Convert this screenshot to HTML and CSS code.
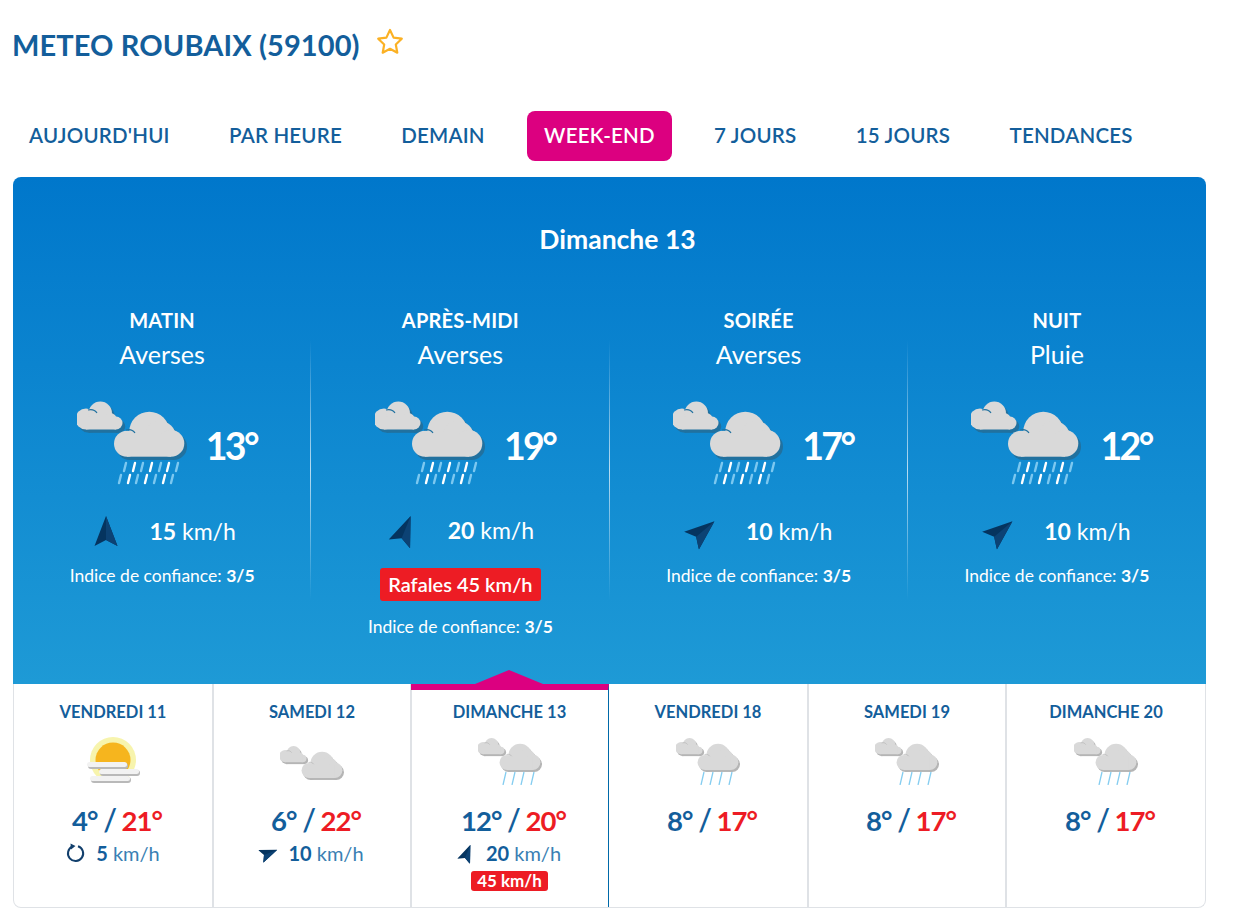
FILE: index.html
```html
<!DOCTYPE html>
<html lang="fr">
  <head>
    <meta charset="UTF-8" />
    <meta name="viewport" content="width=device-width, initial-scale=1.0" />
    <title>Meteo Roubaix</title>
    <link rel="stylesheet" href="styles.css">
  </head>
  <body>
    <svg class="sprites" width="0" height="0">
      <defs>
        <g id="cloud-shape">
          <circle cx="9" cy="19" r="10.5" />
          <circle cx="23.3" cy="13.3" r="11.7" />
          <circle cx="33" cy="20" r="7" />
          <circle cx="39" cy="23" r="6.5" />
          <rect x="9" y="17" width="30" height="12.5" />
          <circle cx="50" cy="43.7" r="13" />
          <circle cx="72.3" cy="31.7" r="20" />
          <circle cx="83" cy="37" r="16" />
          <circle cx="94" cy="43.4" r="13.3" />
          <rect x="50" y="34" width="44" height="22.7" />
        </g>
        <symbol id="clouds" viewBox="0 0 110 60">
          <use href="#cloud-shape" class="cloud-back" x="2.7" y="3.3" />
          <use href="#cloud-shape" class="cloud-front" />
          <path class="cloud-line" d="M11 10c4-1 7 0 9 3M49 30c4-1 7 0 9 3" />
        </symbol>
        <symbol id="rain-big" viewBox="0 0 110 30">
          <path class="rain-light" d="M49 4l-2 8M66 4l-2 8M84 4l-2 8M101 4l-2 8M44 16l-2 8M61 16l-2 8M79 16l-2 8M96 16l-2 8" />
          <path class="rain-white" d="M58 4l-2 8M75 4l-2 8M92 4l-2 8M53 16l-2 8M70 16l-2 8M88 16l-2 8" />
        </symbol>
        <symbol id="nav-arrow" viewBox="0 0 30 30">
          <path fill="#05345f" d="M15 0L26.5 30L15 24L3.5 30Z" />
          <path fill="#0c4274" d="M15 0L26.5 30L15 24Z" />
        </symbol>
      </defs>
    </svg>

    <div class="page">
      <div class="title-row">
        <h1 class="title">METEO ROUBAIX (59100)</h1>
        <svg class="star" viewBox="0 0 28 27">
          <path d="M14 2l3.6 7.6 8.2 1.1-6 5.8 1.5 8.2L14 20.8l-7.3 3.9 1.5-8.2-6-5.8 8.2-1.1Z" />
        </svg>
      </div>

      <nav class="tabs">
        <a class="tab">AUJOURD'HUI</a>
        <a class="tab">PAR HEURE</a>
        <a class="tab">DEMAIN</a>
        <a class="tab active">WEEK-END</a>
        <a class="tab">7 JOURS</a>
        <a class="tab">15 JOURS</a>
        <a class="tab">TENDANCES</a>
      </nav>

      <section class="hero">
        <h2 class="hero-date">Dimanche 13</h2>
        <div class="periods">
          <div class="period">
            <div class="period-name">MATIN</div>
            <div class="period-sky">Averses</div>
            <div class="period-main">
              <svg class="icon-big"><use href="#clouds" width="110" height="60" /><use href="#rain-big" y="59" width="110" height="30" /></svg>
              <span class="period-temp">13°</span>
            </div>
            <div class="period-wind">
              <svg class="arrow-big dir-n"><use href="#nav-arrow" /></svg>
              <span><b>15</b> km/h</span>
            </div>
            <div class="trust">Indice de confiance: <b>3/5</b></div>
          </div>
          <div class="period">
            <div class="period-name">APRÈS-MIDI</div>
            <div class="period-sky">Averses</div>
            <div class="period-main">
              <svg class="icon-big"><use href="#clouds" width="110" height="60" /><use href="#rain-big" y="59" width="110" height="30" /></svg>
              <span class="period-temp">19°</span>
            </div>
            <div class="period-wind">
              <svg class="arrow-big dir-nne"><use href="#nav-arrow" /></svg>
              <span><b>20</b> km/h</span>
            </div>
            <div class="gust">Rafales 45 km/h</div>
            <div class="trust">Indice de confiance: <b>3/5</b></div>
          </div>
          <div class="period">
            <div class="period-name">SOIRÉE</div>
            <div class="period-sky">Averses</div>
            <div class="period-main">
              <svg class="icon-big"><use href="#clouds" width="110" height="60" /><use href="#rain-big" y="59" width="110" height="30" /></svg>
              <span class="period-temp">17°</span>
            </div>
            <div class="period-wind">
              <svg class="arrow-big dir-ne"><use href="#nav-arrow" /></svg>
              <span><b>10</b> km/h</span>
            </div>
            <div class="trust">Indice de confiance: <b>3/5</b></div>
          </div>
          <div class="period">
            <div class="period-name">NUIT</div>
            <div class="period-sky">Pluie</div>
            <div class="period-main">
              <svg class="icon-big"><use href="#clouds" width="110" height="60" /><use href="#rain-big" y="59" width="110" height="30" /></svg>
              <span class="period-temp">12°</span>
            </div>
            <div class="period-wind">
              <svg class="arrow-big dir-ne"><use href="#nav-arrow" /></svg>
              <span><b>10</b> km/h</span>
            </div>
            <div class="trust">Indice de confiance: <b>3/5</b></div>
          </div>
        </div>
      </section>

      <section class="days">
        <div class="day">
          <div class="day-name">VENDREDI 11</div>
          <svg class="icon-small" viewBox="0 0 64 48">
            <circle cx="32" cy="23" r="23" fill="#f7f4ad" />
            <circle cx="32" cy="23" r="17.5" fill="#f6b51e" />
            <rect class="fog-back" x="7" y="26" width="40" height="6" rx="3" />
            <rect class="fog-front" x="6" y="25" width="40" height="5" rx="2.5" />
            <rect class="fog-back" x="19" y="33" width="40" height="6" rx="3" />
            <rect class="fog-front" x="18" y="32" width="40" height="5" rx="2.5" />
            <rect class="fog-back" x="10" y="40" width="40" height="6" rx="3" />
            <rect class="fog-front" x="9" y="39" width="40" height="5" rx="2.5" />
          </svg>
          <div class="day-temp">4° <i>/</i> <em>21°</em></div>
          <div class="day-wind">
            <svg class="arrow-calm" viewBox="0 0 20 20">
              <path d="M12 3.2a7.6 7.6 0 1 1-5.6.3" />
              <path class="arrow-tip" d="M4.5 0.5L9.5 3L5 6.5Z" />
            </svg>
            <span><b>5</b> km/h</span>
          </div>
        </div>
        <div class="day">
          <div class="day-name">SAMEDI 12</div>
          <svg class="icon-small"><use href="#clouds" y="8" width="64" height="35" /></svg>
          <div class="day-temp">6° <i>/</i> <em>22°</em></div>
          <div class="day-wind">
            <svg class="arrow-small dir-ene"><use href="#nav-arrow" /></svg>
            <span><b>10</b> km/h</span>
          </div>
        </div>
        <div class="day selected">
          <div class="day-name">DIMANCHE 13</div>
          <svg class="icon-small"><use href="#clouds" width="64" height="35" /><path class="rain-thin" d="M28 35l-3 13M37 35l-3 13M46 35l-3 13M56 35l-3 13" /></svg>
          <div class="day-temp">12° <i>/</i> <em>20°</em></div>
          <div class="day-wind">
            <svg class="arrow-small dir-nne"><use href="#nav-arrow" /></svg>
            <span><b>20</b> km/h</span>
          </div>
          <div class="day-gust">45 km/h</div>
        </div>
        <div class="day">
          <div class="day-name">VENDREDI 18</div>
          <svg class="icon-small"><use href="#clouds" width="64" height="35" /><path class="rain-thin" d="M28 35l-3 13M37 35l-3 13M46 35l-3 13M56 35l-3 13" /></svg>
          <div class="day-temp">8° <i>/</i> <em>17°</em></div>
        </div>
        <div class="day">
          <div class="day-name">SAMEDI 19</div>
          <svg class="icon-small"><use href="#clouds" width="64" height="35" /><path class="rain-thin" d="M28 35l-3 13M37 35l-3 13M46 35l-3 13M56 35l-3 13" /></svg>
          <div class="day-temp">8° <i>/</i> <em>17°</em></div>
        </div>
        <div class="day">
          <div class="day-name">DIMANCHE 20</div>
          <svg class="icon-small"><use href="#clouds" width="64" height="35" /><path class="rain-thin" d="M28 35l-3 13M37 35l-3 13M46 35l-3 13M56 35l-3 13" /></svg>
          <div class="day-temp">8° <i>/</i> <em>17°</em></div>
        </div>
      </section>
    </div>
  </body>
</html>
```

FILE: styles.css
```css
* {
  margin: 0;
  padding: 0;
  box-sizing: border-box;
}
body {
  font-family: Lato, "Noto Sans", sans-serif;
  color: #135e9b;
  background: #fff;
}
.sprites {
  position: absolute;
}
.page {
  width: 1193px;
  margin-left: 13px;
  padding-top: 26px;
}

/* title */
.title-row {
  display: flex;
  align-items: flex-start;
  gap: 16px;
  height: 85px;
  margin-left: -1px;
}
.title {
  font-size: 29px;
  line-height: 38px;
  font-weight: 700;
  letter-spacing: 0.1px;
}
.star {
  width: 28px;
  height: 27px;
  margin-top: 2px;
}
.star path {
  fill: none;
  stroke: #fbb124;
  stroke-width: 2.2;
  stroke-linejoin: round;
}

/* tabs */
.tabs {
  display: flex;
  gap: 25.3px;
  height: 50px;
  margin-left: -1px;
}
.tab {
  display: flex;
  align-items: center;
  padding: 0 17px 3px;
  border-radius: 8px;
  font-size: 20.5px;
  font-weight: 600;
  letter-spacing: 0.2px;
}
.tab.active {
  background: #dc0080;
  color: #fff;
}

/* blue panel */
.hero {
  height: 507px;
  margin-top: 16px;
  padding-top: 44px;
  border-radius: 8px 8px 0 0;
  background: linear-gradient(#0077cb, #1e9ad6);
  color: #fff;
}
.hero-date {
  font-size: 26.5px;
  line-height: 36px;
  font-weight: 700;
  text-align: center;
  margin-left: 16px;
}
.periods {
  display: grid;
  grid-template-columns: repeat(4, 1fr);
  margin-top: 49px;
}
.period {
  display: flex;
  flex-direction: column;
  align-items: center;
  height: 320px;
  background: no-repeat right 0 top 34px / 1px 260px linear-gradient(rgba(255,255,255,0), rgba(255,255,255,0.7) 50%, rgba(255,255,255,0));
}
.period:last-child {
  background: none;
}
.period-name {
  font-size: 20px;
  line-height: 28px;
  font-weight: 700;
  letter-spacing: 0.2px;
}
.period-sky {
  margin-top: 6px;
  font-size: 25px;
  line-height: 28px;
}
.period-main {
  display: flex;
  align-items: center;
  gap: 19px;
  width: 182px;
  height: 88px;
  margin: 32px 0 0 11px;
}
.icon-big {
  flex: none;
  width: 110px;
  height: 88px;
  --cloud: #d9d9d9;
  --cloud-dark: #21719f;
}
.period-temp {
  font-size: 37.5px;
  font-weight: 700;
  letter-spacing: -2.5px;
  margin-top: 2px;
}
.period-wind {
  display: flex;
  align-items: center;
  gap: 28px;
  height: 32px;
  margin: 27px 0 0 3px;
  font-size: 23px;
}
.arrow-big {
  width: 30px;
  height: 30px;
}
.trust {
  margin-top: 19px;
  font-size: 17.5px;
  line-height: 20px;
}
.gust {
  margin-top: 23px;
  padding: 0 8px;
  height: 33px;
  line-height: 33px;
  border-radius: 3px;
  background: #ed1c24;
  font-size: 20px;
  font-weight: 600;
}
.gust + .trust {
  margin-top: 16px;
}

.dir-n {
  transform: rotate(0deg);
}
.dir-nne {
  transform: rotate(22deg);
}
.dir-ne {
  transform: rotate(50deg);
}
.dir-ene {
  transform: rotate(68deg);
}

/* clouds */
.cloud-back {
  fill: var(--cloud-dark);
}
.cloud-front {
  fill: var(--cloud);
}
.cloud-line {
  fill: none;
  stroke: var(--cloud-dark);
  stroke-width: 1.2;
}
.rain-light,
.rain-white {
  fill: none;
  stroke-width: 2.4;
  stroke-linecap: round;
}
.rain-light {
  stroke: #7cc8f0;
}
.rain-white {
  stroke: #fff;
}
.rain-thin {
  fill: none;
  stroke: #85cdf0;
  stroke-width: 1.3;
}

/* days */
.days {
  display: grid;
  grid-template-columns: 200px 198px 197px 200px 198px 1fr;
  height: 224px;
  border: 1px solid #dfe2e6;
  border-top: 0;
  border-radius: 0 0 8px 8px;
}
.day {
  position: relative;
  display: flex;
  flex-direction: column;
  align-items: center;
  padding-top: 18px;
  border-right: 2px solid #dfe2e6;
}
.day:last-child {
  border-right: 0;
}
.day.selected {
  margin-left: -1px;
  border-top: 6px solid #dc0080;
  border-right: 1px solid #0069a8;
  padding-top: 12px;
}
.day.selected::before {
  content: "";
  position: absolute;
  top: -20px;
  left: 64px;
  border-bottom: 14px solid #dc0080;
  border-left: 34px solid transparent;
  border-right: 34px solid transparent;
}
.day-name {
  font-size: 16.5px;
  line-height: 20px;
  font-weight: 700;
}
.icon-small {
  width: 64px;
  height: 48px;
  margin-top: 15px;
  --cloud: #d9d9d9;
  --cloud-dark: #b5b5b5;
}
.fog-back {
  fill: #b9b9b9;
}
.fog-front {
  fill: #f2f2f2;
}
.day-temp {
  margin: 17px 0 0 8px;
  font-size: 27.5px;
  line-height: 34px;
  font-weight: 700;
  letter-spacing: -1px;
}
.day-temp i {
  font-style: normal;
  font-weight: 600;
  font-size: 30px;
}
.day-temp em {
  font-style: normal;
  color: #ed1c24;
}
.day-wind {
  display: flex;
  align-items: center;
  gap: 10px;
  height: 24px;
  margin-top: 3px;
  font-size: 20px;
}
.day-wind span {
  color: #3a7fb3;
}
.day-wind b {
  color: #135e9b;
}
.arrow-small {
  width: 18px;
  height: 18px;
}
.arrow-calm {
  width: 20px;
  height: 20px;
}
.arrow-calm path {
  fill: none;
  stroke: #123f6c;
  stroke-width: 2;
}
.arrow-calm .arrow-tip {
  fill: #123f6c;
  stroke: none;
}
.day-gust {
  margin-top: 6px;
  padding: 0 6px;
  height: 20px;
  line-height: 20px;
  border-radius: 3px;
  background: #ed1c24;
  color: #fff;
  font-size: 17px;
  font-weight: 700;
}
```
